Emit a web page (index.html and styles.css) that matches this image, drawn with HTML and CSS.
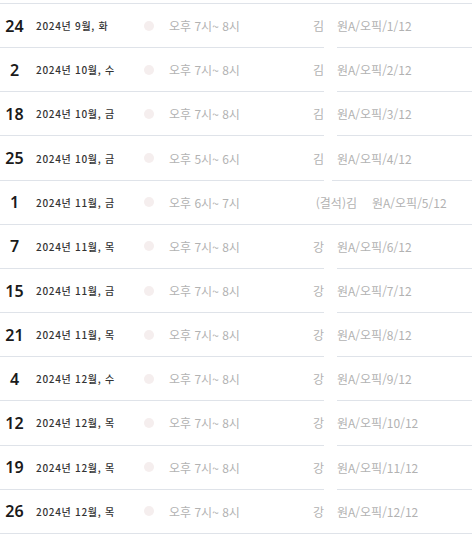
FILE: index.html
```html
<!DOCTYPE html>
<html lang="ko">
<head>
<meta charset="utf-8">
<link rel="stylesheet" href="styles.css">
</head>
<body>
<div class="list">
  <div class="row">
    <div class="main"><span class="day">24</span><span class="date">2024년 9월, 화</span><span class="dot"></span><span class="time">오후 7시~ 8시</span><span class="teacher">김</span></div>
    <div class="spacer"></div>
    <div class="course">원A/오픽/1/12</div>
  </div>
  <div class="row">
    <div class="main"><span class="day">2</span><span class="date">2024년 10월, 수</span><span class="dot"></span><span class="time">오후 7시~ 8시</span><span class="teacher">김</span></div>
    <div class="spacer"></div>
    <div class="course">원A/오픽/2/12</div>
  </div>
  <div class="row">
    <div class="main"><span class="day">18</span><span class="date">2024년 10월, 금</span><span class="dot"></span><span class="time">오후 7시~ 8시</span><span class="teacher">김</span></div>
    <div class="spacer"></div>
    <div class="course">원A/오픽/3/12</div>
  </div>
  <div class="row row--narrow-gap">
    <div class="main"><span class="day">25</span><span class="date">2024년 10월, 금</span><span class="dot"></span><span class="time">오후 5시~ 6시</span><span class="teacher">김</span></div>
    <div class="spacer"></div>
    <div class="course">원A/오픽/4/12</div>
  </div>
  <div class="row row--joined">
    <div class="main main--wide"><span class="day">1</span><span class="date">2024년 11월, 금</span><span class="dot"></span><span class="time">오후 6시~ 7시</span><span class="teacher">(결석)김</span></div>
    <div class="course">원A/오픽/5/12</div>
  </div>
  <div class="row">
    <div class="main"><span class="day">7</span><span class="date">2024년 11월, 목</span><span class="dot"></span><span class="time">오후 7시~ 8시</span><span class="teacher">강</span></div>
    <div class="spacer"></div>
    <div class="course">원A/오픽/6/12</div>
  </div>
  <div class="row">
    <div class="main"><span class="day">15</span><span class="date">2024년 11월, 금</span><span class="dot"></span><span class="time">오후 7시~ 8시</span><span class="teacher">강</span></div>
    <div class="spacer"></div>
    <div class="course">원A/오픽/7/12</div>
  </div>
  <div class="row">
    <div class="main"><span class="day">21</span><span class="date">2024년 11월, 목</span><span class="dot"></span><span class="time">오후 7시~ 8시</span><span class="teacher">강</span></div>
    <div class="spacer"></div>
    <div class="course">원A/오픽/8/12</div>
  </div>
  <div class="row">
    <div class="main"><span class="day">4</span><span class="date">2024년 12월, 수</span><span class="dot"></span><span class="time">오후 7시~ 8시</span><span class="teacher">강</span></div>
    <div class="spacer"></div>
    <div class="course">원A/오픽/9/12</div>
  </div>
  <div class="row">
    <div class="main"><span class="day">12</span><span class="date">2024년 12월, 목</span><span class="dot"></span><span class="time">오후 7시~ 8시</span><span class="teacher">강</span></div>
    <div class="spacer"></div>
    <div class="course">원A/오픽/10/12</div>
  </div>
  <div class="row">
    <div class="main"><span class="day">19</span><span class="date">2024년 12월, 목</span><span class="dot"></span><span class="time">오후 7시~ 8시</span><span class="teacher">강</span></div>
    <div class="spacer"></div>
    <div class="course">원A/오픽/11/12</div>
  </div>
  <div class="row row--last">
    <div class="main"><span class="day">26</span><span class="date">2024년 12월, 목</span><span class="dot"></span><span class="time">오후 7시~ 8시</span><span class="teacher">강</span></div>
    <div class="course">원A/오픽/12/12</div>
  </div>
</div>
</body>
</html>
```

FILE: styles.css
```css
html, body {
  margin: 0;
  padding: 0;
  background: #ffffff;
}

body {
  font-family: "Noto Sans", "Noto Sans CJK KR", sans-serif;
  width: 472px;
  height: 538px;
  overflow: hidden;
}

.list {
  margin-top: 3px;
  border-top: 1px solid #dfe3e9;
}

.row {
  display: flex;
  height: 44.17px;
}

.main {
  display: flex;
  align-items: center;
  width: 324px;
  flex: none;
  border-bottom: 1px solid #dfe3e9;
  box-sizing: border-box;
}

.main--wide {
  width: 357px;
}

.spacer {
  width: 13px;
  flex: none;
}

.course {
  flex: 1;
  display: flex;
  align-items: center;
  border-bottom: 1px solid #dfe3e9;
  box-sizing: border-box;
  font-family: "Noto Sans CJK KR", sans-serif;
  font-size: 12px;
  color: #b2b2b2;
}

.row--narrow-gap .spacer {
  width: 8px;
}

.row--narrow-gap .course {
  padding-left: 5px;
}

.row--joined .course {
  padding-left: 15px;
}

.row--last .course {
  padding-left: 13px;
}

.day {
  width: 29px;
  flex: none;
  text-align: center;
  font-size: 16px;
  font-weight: 600;
  color: #1a1a1a;
}

.date {
  margin-left: 7px;
  width: 108px;
  flex: none;
  font-family: "Noto Sans CJK KR", sans-serif;
  font-size: 10px;
  font-weight: 500;
  letter-spacing: 0.7px;
  color: #333333;
}

.dot {
  width: 10px;
  height: 10px;
  flex: none;
  border-radius: 50%;
  background: #f5eeee;
}

.time {
  margin-left: 15px;
  flex: none;
  font-family: "Noto Sans CJK KR", sans-serif;
  font-size: 12px;
  color: #b2b2b2;
}

.teacher {
  flex: 1;
  text-align: right;
  font-family: "Noto Sans CJK KR", sans-serif;
  font-size: 12px;
  color: #b2b2b2;
}
```
